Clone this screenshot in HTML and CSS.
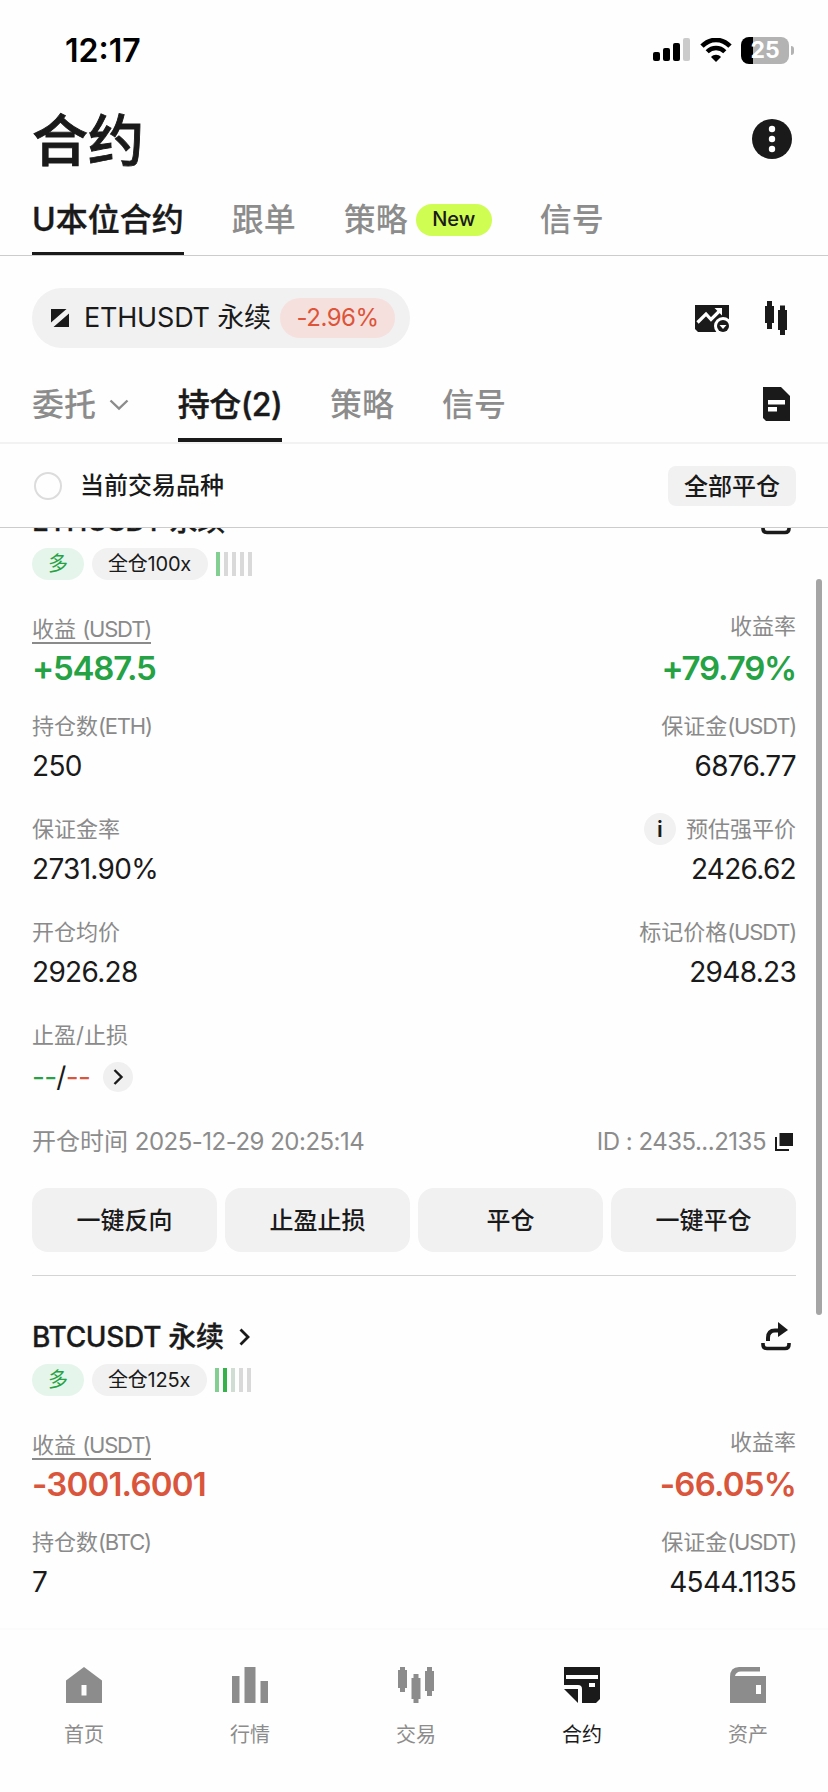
FILE: index.html
```html
<!DOCTYPE html>
<html lang="zh-CN">
<head>
  <meta charset="UTF-8" />
  <meta name="viewport" content="width=device-width, initial-scale=1" />
  <title>合约</title>
  <link rel="stylesheet" href="styles.css">
</head>
<body>
  <div class="status-bar">
    <span class="time">12:17</span>
    <div class="status-icons">
      <svg width="38" height="24" viewBox="0 0 38 24">
        <rect x="0" y="14" width="7" height="9" rx="2" />
        <rect x="10" y="10" width="7" height="13" rx="2" />
        <rect x="20" y="5" width="7" height="18" rx="2" />
        <rect x="30" y="0" width="7" height="23" rx="2" fill="#cbcbcb" />
      </svg>
      <svg class="wifi" width="32" height="24" viewBox="0 0 32 24">
        <path d="M2 8.2C10-.2 22-.2 30 8.2" fill="none" stroke="#000" stroke-width="4.6" />
        <path d="M7.2 13.8c5-5 12.6-5 17.6 0" fill="none" stroke="#000" stroke-width="4.4" />
        <path d="M16 24l-5-5c2.6-3 7.4-3 10 0z" />
      </svg>
      <div class="battery"><span>25</span></div>
    </div>
  </div>

  <header class="page-title">
    <h1>合约</h1>
    <svg width="40" height="40" viewBox="0 0 40 40">
      <circle cx="20" cy="20" r="20" fill="#1a1a1a" />
      <g fill="#fff"><circle cx="20" cy="10" r="3.2" /><circle cx="20" cy="20" r="3.2" /><circle cx="20" cy="30" r="3.2" /></g>
    </svg>
  </header>

  <nav class="tabs tabs-main">
    <a class="tab active">U本位合约</a>
    <a class="tab">跟单</a>
    <a class="tab">策略<span class="badge-new">New</span></a>
    <a class="tab">信号</a>
  </nav>

  <div class="symbol-row">
    <div class="symbol">
      <svg width="18" height="18" viewBox="0 0 18 18" fill="#1a1a1a"><path d="M0 0h15.5L0 13.500zM18 4.500V18H2.500z" /></svg>
      <span class="symbol-name">ETHUSDT 永续</span>
      <span class="change">-2.96%</span>
    </div>
    <div class="symbol-tools">
      <svg width="34" height="27" viewBox="0 0 34 27">
        <path d="M0 0h34v27H3l-3-3z" fill="#1a1a1a" />
        <path d="M2.5 17.5L11 9l5 5.500 9-9" fill="none" stroke="#fff" stroke-width="3.2" />
        <path d="M19.500 3H27v7.500z" fill="#fff" />
        <circle cx="28" cy="21" r="9" fill="#fff" />
        <circle cx="28" cy="21" r="6" fill="#1a1a1a" />
        <path d="M24.500 20h7L28 24z" fill="#fff" />
      </svg>
      <svg width="22" height="34" viewBox="0 0 22 34" fill="#1a1a1a">
        <path d="M2 0h5v5h2v17H7v6H2v-6H0V5h2zM15 4.500h5V9h2v20h-2v5h-5v-5h-2V9h2z" />
      </svg>
    </div>
  </div>

  <nav class="tabs tabs-sub">
    <a class="tab">委托<svg class="caret" width="20" height="12" viewBox="0 0 20 12"><path d="M1.500 1.500L10 9.500l8.500-8" fill="none" stroke="#8c8c8c" stroke-width="2.400" /></svg></a>
    <a class="tab active">持仓(2)</a>
    <a class="tab">策略</a>
    <a class="tab">信号</a>
    <svg class="doc" width="27" height="34" viewBox="0 0 27 34">
      <path d="M0 0h18l9 9v25H3l-3-3z" fill="#1a1a1a" />
      <path d="M5 13h17v4.500H5zM5 20h9v4.500H5z" fill="#fff" />
    </svg>
  </nav>

  <div class="filter">
    <span class="radio"></span>
    <span>当前交易品种</span>
    <button class="close-all">全部平仓</button>
  </div>

  <main class="positions">
    <section class="card">
      <div class="card-head">
        <h2>ETHUSDT 永续</h2>
        <svg class="share" width="30" height="29" viewBox="0 0 30 29"><path d="M7 19v-3q0-7.500 7-7.500h4" fill="none" stroke="#1a1a1a" stroke-width="4" /><path d="M17 0l10 8-10 7z" fill="#1a1a1a" /><path d="M2 21v1.500q0 4 4 4h18q4 0 4-4V21" fill="none" stroke="#1a1a1a" stroke-width="3.600" /></svg>
      </div>
      <div class="tags">
        <span class="tag long">多</span>
        <span class="tag lever">全仓100x</span>
        <span class="risk"><i class="on"></i><i></i><i></i><i></i><i></i></span>
      </div>
      <div class="row row-pnl">
        <div class="cell"><span class="label dotted">收益 <span class="unit">(USDT)</span></span><b class="up">+5487.5</b></div>
        <div class="cell right"><span class="label">收益率</span><b class="up">+79.79%</b></div>
      </div>
      <div class="row">
        <div class="cell"><span class="label">持仓数<span class="unit">(ETH)</span></span><span class="value">250</span></div>
        <div class="cell right"><span class="label">保证金<span class="unit">(USDT)</span></span><span class="value">6876.77</span></div>
      </div>
      <div class="row">
        <div class="cell"><span class="label">保证金率</span><span class="value">2731.90%</span></div>
        <div class="cell right"><span class="label"><span class="info">i</span>预估强平价</span><span class="value">2426.62</span></div>
      </div>
      <div class="row">
        <div class="cell"><span class="label">开仓均价</span><span class="value">2926.28</span></div>
        <div class="cell right"><span class="label">标记价格<span class="unit">(USDT)</span></span><span class="value">2948.23</span></div>
      </div>
      <div class="row">
        <div class="cell">
          <span class="label">止盈/止损</span>
          <span class="value tpsl"><span class="up">--</span>/<span class="down">--</span>
            <svg width="30" height="30" viewBox="0 0 30 30"><circle cx="15" cy="15" r="15" fill="#f0f0f0" /><path d="M11.500 8l7 7-7 7" fill="none" stroke="#1a1a1a" stroke-width="2.400" /></svg>
          </span>
        </div>
      </div>
      <div class="meta">
        <span>开仓时间 <span class="date">2025-12-29 20:25:14</span></span>
        <span class="order-id">ID : 2435...2135
          <svg width="18" height="18" viewBox="0 0 18 18" fill="#1a1a1a"><path d="M4.500 0H18v13H4.500zM0 4h2v12h12v2H0z" /></svg>
        </span>
      </div>
      <div class="actions">
        <button>一键反向</button>
        <button>止盈止损</button>
        <button>平仓</button>
        <button>一键平仓</button>
      </div>
    </section>

    <section class="card">
      <div class="card-head">
        <h2>BTCUSDT 永续</h2>
        <svg class="more" width="12" height="18" viewBox="0 0 12 18"><path d="M1.500 1.500L9 9l-7.500 7.500" fill="none" stroke="#1a1a1a" stroke-width="2.800" /></svg>
        <svg class="share" width="30" height="29" viewBox="0 0 30 29"><path d="M7 19v-3q0-7.500 7-7.500h4" fill="none" stroke="#1a1a1a" stroke-width="4" /><path d="M17 0l10 8-10 7z" fill="#1a1a1a" /><path d="M2 21v1.500q0 4 4 4h18q4 0 4-4V21" fill="none" stroke="#1a1a1a" stroke-width="3.600" /></svg>
      </div>
      <div class="tags">
        <span class="tag long">多</span>
        <span class="tag lever">全仓125x</span>
        <span class="risk"><i class="on"></i><i class="full"></i><i class="fade"></i><i></i><i></i></span>
      </div>
      <div class="row row-pnl">
        <div class="cell"><span class="label dotted">收益 <span class="unit">(USDT)</span></span><b class="down">-3001.6001</b></div>
        <div class="cell right"><span class="label">收益率</span><b class="down">-66.05%</b></div>
      </div>
      <div class="row">
        <div class="cell"><span class="label">持仓数<span class="unit">(BTC)</span></span><span class="value">7</span></div>
        <div class="cell right"><span class="label">保证金<span class="unit">(USDT)</span></span><span class="value">4544.1135</span></div>
      </div>
    </section>
  </main>
  <div class="scrollbar"></div>

  <nav class="bottom-nav">
    <a>
      <svg width="36" height="36" viewBox="0 0 36 36"><path fill-rule="evenodd" d="M18 0l18 13.500V36H0V13.500zM15.500 18v10.500h5V18z" /></svg>
      首页
    </a>
    <a>
      <svg width="36" height="36" viewBox="0 0 36 36"><path d="M0 9h7.500v27H0zM12.500 0h11v36h-11zM28.500 14H36v22h-7.500z" /></svg>
      行情
    </a>
    <a>
      <svg width="36" height="36" viewBox="0 0 36 36"><path d="M2 0h5v3h2v18H7v4H2v-4H0V3h2zM15.500 7h5v4h2v21h-2v4h-5v-4h-2V11h2zM29 0h5v4h2v20h-2v5h-5v-5h-2V4h2z" /></svg>
      交易
    </a>
    <a class="active">
      <svg width="36" height="36" viewBox="0 0 36 36"><path fill-rule="evenodd" d="M0 0h36v32l-4 4H18V22q0-4-4-4H0zM2 8v4h32V8zM25 16v4h6v-4z" /><path d="M0 22h14v14z" /></svg>
      合约
    </a>
    <a>
      <svg width="36" height="36" viewBox="0 0 36 36"><path fill-rule="evenodd" d="M9 0h21v4.500H11q-5 0-6 4.500h31v27H0V10Q0 0 9 0zM26 18v9h5v-9z" /></svg>
      资产
    </a>
  </nav>
</body>
</html>
```

FILE: styles.css
```css
* {
  box-sizing: border-box;
}
html, body {
  margin: 0;
  height: 1792px;
  overflow: hidden;
}
body {
  display: flex;
  flex-direction: column;
  background: #fefefe;
  color: #1a1a1a;
  font-family: Inter, "Noto Sans CJK SC", sans-serif;
  position: relative;
}
svg {
  display: block;
  flex: none;
}
button {
  border: none;
  background: #f1f1f1;
  color: #1a1a1a;
  font: 500 24px/36px Inter, "Noto Sans CJK SC", sans-serif;
  padding: 2px 0 0;
}

/* barra de estado */
.status-bar {
  height: 100px;
  padding: 0 34px 0 65px;
  display: flex;
  align-items: center;
  justify-content: space-between;
  color: #000;
}
.time {
  font-size: 32px;
  font-weight: 600;
}
.status-icons {
  display: flex;
  align-items: center;
  gap: 9px;
}
.battery {
  width: 48px;
  height: 27px;
  margin-right: 5px;
  border-radius: 8px;
  background: linear-gradient(90deg, #000 12px, #b3b3b3 12px);
  color: #fff;
  font-size: 23px;
  font-weight: 700;
  line-height: 27px;
  text-align: center;
  position: relative;
}
.battery::after {
  content: "";
  position: absolute;
  right: -5px;
  top: 9px;
  width: 3px;
  height: 9px;
  border-radius: 0 3px 3px 0;
  background: #b3b3b3;
}

.page-title {
  height: 78px;
  padding: 0 36px 0 32px;
  display: flex;
  align-items: center;
  justify-content: space-between;
}
h1 {
  margin: 4px 0 0;
  font-size: 56px;
  font-weight: 500;
  line-height: 78px;
  -webkit-text-stroke: 0.9px #1a1a1a;
}

/* tabs */
.tabs {
  display: flex;
  gap: 48px;
  padding: 0 32px;
}
.tab {
  display: flex;
  align-items: center;
  font-size: 32px;
  font-weight: 500;
  line-height: 40px;
  color: #8c8c8c;
  white-space: nowrap;
}
.tab.active {
  color: #1a1a1a;
  -webkit-text-stroke: 0.4px #1a1a1a;
}
.tabs-main {
  height: 78px;
  border-bottom: 1px solid #ccc;
}
.tabs-main .tab {
  padding-top: 7px;
}
.tabs-main .active {
  border-bottom: 3px solid #1a1a1a;
  padding-top: 10px;
}
.badge-new {
  width: 76px;
  height: 32px;
  margin-left: 8px;
  border-radius: 16px;
  background: #cffd51;
  color: #1a1a1a;
  font-size: 20px;
  line-height: 31px;
  text-align: center;
}

.symbol-row {
  height: 124px;
  padding: 0 41px 0 32px;
  display: flex;
  align-items: center;
  justify-content: space-between;
}
.symbol {
  width: 378px;
  height: 60px;
  padding: 0 15px 0 19px;
  border-radius: 30px;
  background: #f1f1f1;
  display: flex;
  align-items: center;
}
.symbol-name {
  margin-left: 15px;
  font-size: 27px;
  line-height: 40px;
  letter-spacing: -0.2px;
  white-space: nowrap;
}
.change {
  width: 115px;
  height: 40px;
  margin-left: auto;
  border-radius: 20px;
  background: #f5e0de;
  color: #dd5439;
  font-size: 24px;
  line-height: 40px;
  letter-spacing: -0.5px;
  text-align: center;
}
.symbol-tools {
  display: flex;
  align-items: center;
  gap: 36px;
}

.tabs-sub {
  height: 64px;
  border-bottom: 2px solid #f2f2f2;
}
.tabs-sub .tab {
  padding-bottom: 12px;
}
.tabs-sub .active {
  width: 104px;
  justify-content: center;
  border-bottom: 4px solid #1a1a1a;
  padding-bottom: 8px;
  letter-spacing: -0.6px;
}
.caret {
  margin: 0 1px 0 13px;
}
.doc {
  margin: 7px 6px 0 auto;
}

.filter {
  height: 84px;
  padding: 0 32px;
  border-bottom: 1px solid #ccc;
  display: flex;
  align-items: center;
  font-size: 24px;
  font-weight: 500;
  line-height: 36px;
}
.radio {
  width: 28px;
  height: 28px;
  margin: 0 18px 0 2px;
  border: 2px solid #dcdcdc;
  border-radius: 50%;
}
.close-all {
  width: 128px;
  height: 40px;
  margin-left: auto;
  border-radius: 8px;
}

/* posiciones */
.positions {
  height: 1100px;
  overflow: hidden;
}
.card {
  margin: 0 32px;
  padding-top: 41px;
}
.card:first-child {
  margin-top: -68px;
  border-bottom: 1px solid #d4d4d4;
  padding-bottom: 23px;
}
.card-head {
  height: 40px;
  display: flex;
  align-items: center;
}
h2 {
  margin: 0;
  font-size: 28px;
  font-weight: 500;
  line-height: 40px;
  letter-spacing: -0.3px;
  -webkit-text-stroke: 0.3px #1a1a1a;
}
.more {
  margin: -1px 0 0 15px;
}
.share {
  margin: -1px 5px 0 auto;
}
.tags {
  display: flex;
  align-items: center;
  gap: 8px;
  margin-top: 7px;
}
.tag {
  height: 32px;
  padding: 0 17px;
  border-radius: 16px;
  background: #f1f1f1;
  font-size: 20px;
  line-height: 33px;
}
.lever {
  padding: 0 17px 0 16px;
  letter-spacing: -0.2px;
}
.long {
  width: 52px;
  padding: 0 16px;
  background: #e6f5eb;
  color: #25a244;
}
.risk {
  display: flex;
  gap: 4px;
}
.risk i {
  width: 4px;
  height: 24px;
  background: #d9d9d9;
}
.risk .on {
  background: #83cf92;
}
.risk .full {
  background: #36b24b;
}
.risk .fade {
  background: #cfddd3;
}

.row {
  display: flex;
  justify-content: space-between;
  margin-top: 27px;
}
.row-pnl {
  margin-top: 30px;
}
.row-pnl + .row {
  margin-top: 20px;
}
.cell {
  display: flex;
  flex-direction: column;
  align-items: flex-start;
  gap: 4px;
}
.right {
  align-items: flex-end;
}
.label {
  display: flex;
  align-items: center;
  height: 32px;
  font-size: 22px;
  line-height: 32px;
  color: #8a8a8a;
  white-space: pre;
}
.unit {
  letter-spacing: -1.2px;
}
.dotted {
  height: 31px;
  margin: 3px 0 -2px;
  border-bottom: 2px solid #8a8a8a;
  padding-top: 2px;
}
.info {
  width: 32px;
  height: 32px;
  margin-right: 10px;
  border-radius: 50%;
  background: #f1f1f1;
  color: #1a1a1a;
  font-weight: 600;
  text-align: center;
}
.value {
  font-size: 28px;
  line-height: 41px;
  height: 40px;
  letter-spacing: -0.7px;
}
.cell b {
  font-size: 33px;
  font-weight: 600;
  line-height: 44px;
  letter-spacing: -1.2px;
}
.cell b.down {
  letter-spacing: -0.8px;
}
.up {
  color: #25a244;
}
.down {
  color: #d9553b;
}
.tpsl {
  display: flex;
  align-items: center;
  height: 44px;
}
.tpsl svg {
  margin-left: 13px;
}

.meta {
  display: flex;
  justify-content: space-between;
  margin-top: 27px;
  font-size: 24px;
  line-height: 32px;
  color: #8c8c8c;
}
.date {
  letter-spacing: -0.5px;
}
.order-id {
  display: flex;
  align-items: center;
  gap: 9px;
  padding-right: 3px;
  letter-spacing: -0.5px;
}
.actions {
  display: grid;
  grid-template-columns: repeat(4, 1fr);
  gap: 8px;
  margin-top: 30px;
}
.actions button {
  height: 64px;
  border-radius: 16px;
}

.scrollbar {
  position: absolute;
  left: 816px;
  top: 579px;
  width: 6px;
  height: 736px;
  border-radius: 3px;
  background: #a5a5a5;
}

.bottom-nav {
  flex: 1;
  display: flex;
  padding-left: 1px;
  border-top: 2px solid #fbfbfb;
}
.bottom-nav a {
  flex: none;
  width: 166px;
  padding-top: 37px;
  display: flex;
  flex-direction: column;
  align-items: center;
  gap: 17px;
  font-size: 20px;
  line-height: 30px;
  color: #8c8c8c;
}
.bottom-nav svg {
  fill: #8c8c8c;
}
.bottom-nav .active, .bottom-nav .active svg {
  color: #1a1a1a;
  fill: #1a1a1a;
}
```
